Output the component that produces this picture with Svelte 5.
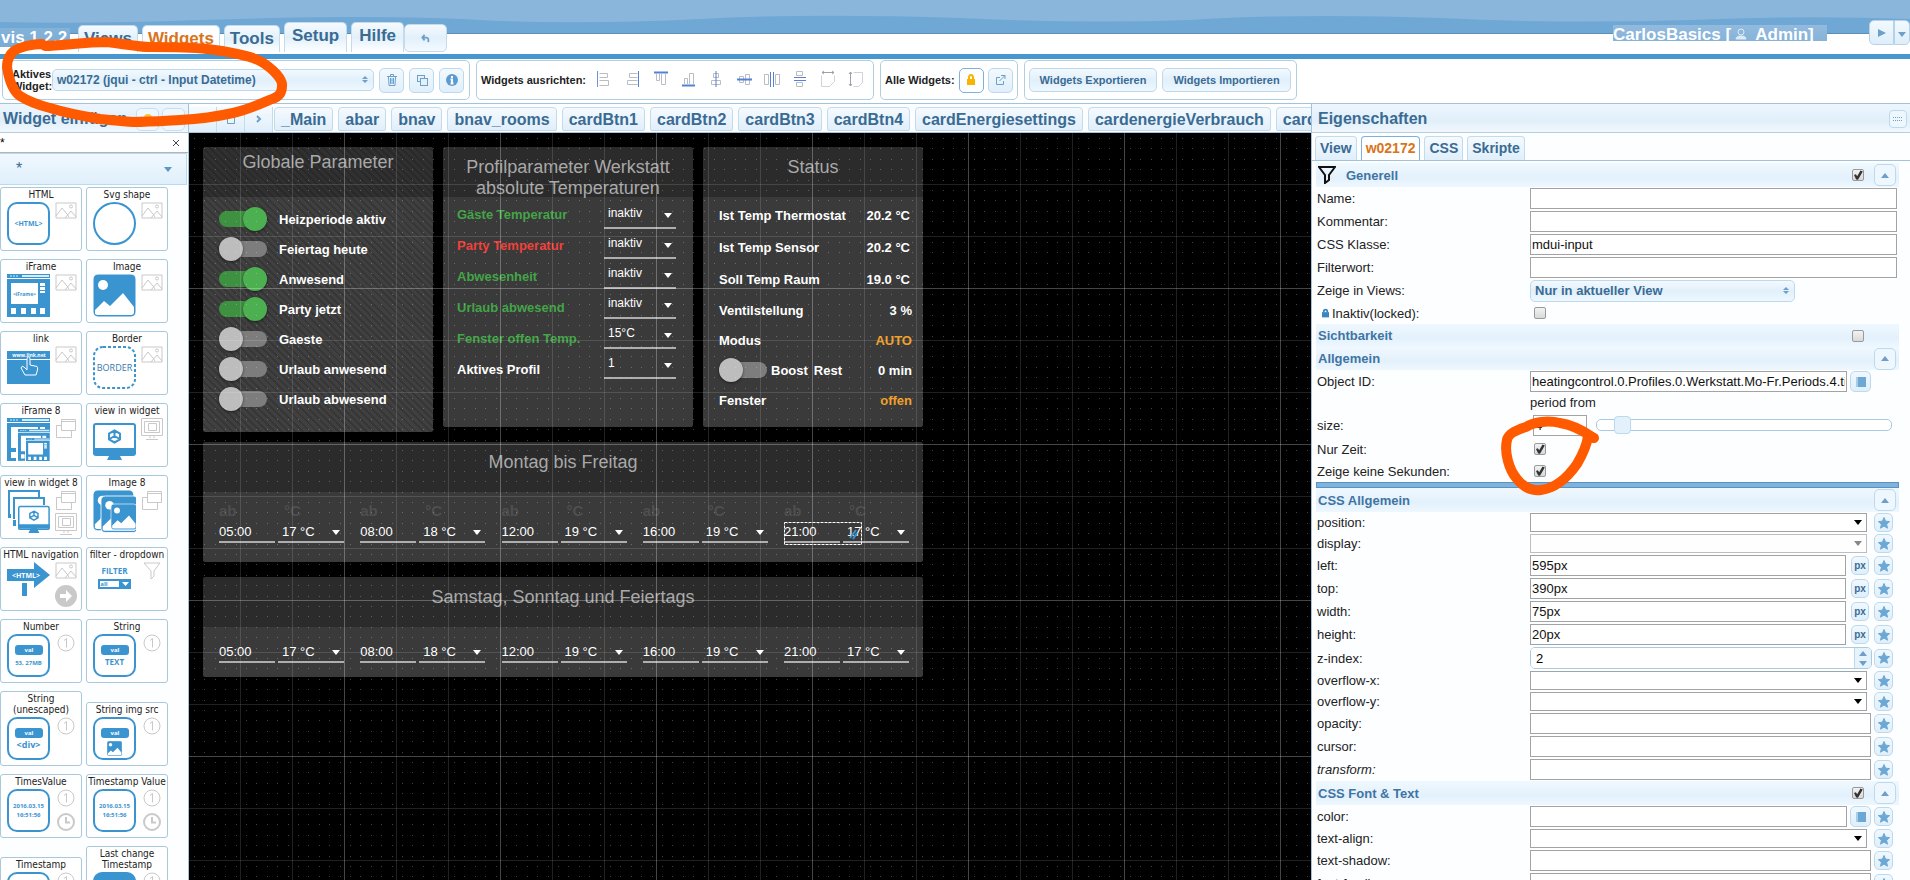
<script lang="ts">
  type Row = {
    label: string;
    kind: "text" | "select" | "number" | "color";
    value?: string;
    end?: "full" | "star" | "px" | "pick";
    dim?: boolean;
    italic?: boolean;
  };

  const mainTabs = [
    { name: "Views" },
    { name: "Widgets", active: true },
    { name: "Tools" },
    { name: "Setup", tall: true },
    { name: "Hilfe", tall: true },
  ];

  const views = [
    "_Main",
    "abar",
    "bnav",
    "bnav_rooms",
    "cardBtn1",
    "cardBtn2",
    "cardBtn3",
    "cardBtn4",
    "cardEnergiesettings",
    "cardenergieVerbrauch",
    "card",
  ];

  const alignIcons = ["left", "right", "top", "bottom", "vmid", "hmid", "hdist", "vdist", "width", "height"];

  const widgets = [
    { name: "HTML", icon: "html", badges: ["image"] },
    { name: "Svg shape", icon: "circle", badges: ["image"] },
    { name: "iFrame", icon: "iframe", badges: ["image"] },
    { name: "Image", icon: "picture", badges: ["image"] },
    { name: "link", icon: "link", badges: ["image"] },
    { name: "Border", icon: "border", badges: ["image"] },
    { name: "iFrame 8", icon: "iframe8", badges: ["windows"] },
    { name: "view in widget", icon: "monitor", badges: ["screen"] },
    { name: "view in widget 8", icon: "monitor8", badges: ["windows", "screen"] },
    { name: "Image 8", icon: "picture8", badges: ["windows"] },
    { name: "HTML navigation", icon: "nav", badges: ["image", "arrow"] },
    { name: "filter - dropdown", icon: "filter", badges: ["funnel"] },
    { name: "Number", icon: "val", text: "53, 27MB", size: 6, badges: ["one"] },
    { name: "String", icon: "val", text: "TEXT", size: 8, badges: ["one"] },
    { name: "String (unescaped)", icon: "val", text: "<div>", size: 9, badges: ["one"] },
    { name: "String img src", icon: "valimg", badges: ["one"] },
    { name: "TimesValue", icon: "date", badges: ["one", "clock"] },
    { name: "Timestamp Value", icon: "date", badges: ["one", "clock"] },
    { name: "Timestamp", icon: "date", badges: ["one", "clock"] },
    { name: "Last change Timestamp", icon: "solid", badges: ["one", "clock"] },
  ];

  let switches = $state([
    { name: "Heizperiode aktiv", on: true },
    { name: "Feiertag heute", on: false },
    { name: "Anwesend", on: true },
    { name: "Party jetzt", on: true },
    { name: "Gaeste", on: false },
    { name: "Urlaub anwesend", on: false },
    { name: "Urlaub abwesend", on: false },
  ]);

  const profile = [
    { name: "Gäste Temperatur", value: "inaktiv", tone: "green" },
    { name: "Party Temperatur", value: "inaktiv", tone: "red" },
    { name: "Abwesenheit", value: "inaktiv", tone: "green" },
    { name: "Urlaub abwesend", value: "inaktiv", tone: "green" },
    { name: "Fenster offen Temp.", value: "15°C", tone: "green" },
    { name: "Aktives Profil", value: "1", tone: "white" },
  ];

  const periods = [
    { time: "05:00", temp: "17 °C" },
    { time: "08:00", temp: "18 °C" },
    { time: "12:00", temp: "19 °C" },
    { time: "16:00", temp: "19 °C" },
    { time: "21:00", temp: "17 °C" },
  ];

  const general: Row[] = [
    { label: "Name", kind: "text", end: "full" },
    { label: "Kommentar", kind: "text", end: "full" },
    { label: "CSS Klasse", kind: "text", value: "mdui-input", end: "full" },
    { label: "Filterwort", kind: "text", end: "full" },
  ];

  const cssCommon: Row[] = [
    { label: "position", kind: "select" },
    { label: "display", kind: "select", dim: true },
    { label: "left", kind: "text", value: "595px", end: "px" },
    { label: "top", kind: "text", value: "390px", end: "px" },
    { label: "width", kind: "text", value: "75px", end: "px" },
    { label: "height", kind: "text", value: "20px", end: "px" },
    { label: "z-index", kind: "number", value: "2" },
    { label: "overflow-x", kind: "select" },
    { label: "overflow-y", kind: "select" },
    { label: "opacity", kind: "text", end: "star" },
    { label: "cursor", kind: "text", end: "star" },
    { label: "transform", kind: "text", end: "star", italic: true },
  ];

  const cssFont: Row[] = [
    { label: "color", kind: "color", end: "pick" },
    { label: "text-align", kind: "select" },
    { label: "text-shadow", kind: "text", end: "star" },
    { label: "font-family", kind: "text", end: "star" },
  ];

  // five dots per minor grid cell
  const dots = [5, 15, 26, 36, 47];

  let size = $state(4);
</script>

{#snippet tri(dir: string)}
  <svg class="tri" viewBox="0 0 8 5" aria-hidden="true">
    <path d={dir === "up" ? "M0 5L4 0L8 5Z" : "M0 0L4 5L8 0Z"} fill="currentColor" />
  </svg>
{/snippet}

{#snippet updown()}
  <svg class="updown" viewBox="0 0 6 9" aria-hidden="true">
    <path d="M0 4L3 1L6 4ZM0 5L3 8L6 5Z" fill="#6d9fc9" />
  </svg>
{/snippet}

{#snippet star()}
  <button class="mini star" type="button" aria-label="Favorit">
    <svg viewBox="0 0 12 12"><path d="M6 0.5L7.6 4.2L11.6 4.6L8.6 7.2L9.5 11.2L6 9.1L2.5 11.2L3.4 7.2L0.4 4.6L4.4 4.2Z" fill="#6da8d5" stroke="#6da8d5" /></svg>
  </button>
{/snippet}

{#snippet pick()}
  <button class="mini pick" type="button" aria-label="Auswählen">
    <svg viewBox="0 0 12 12"><path d="M3 1H11V11H3Z" fill="#6da8d5" /><path d="M1 2H3M1 4H3M1 6H3M1 8H3M1 10H3" stroke="#6da8d5" /></svg>
  </button>
{/snippet}

{#snippet field(row: Row)}
  <div class="row {row.kind}">
    <label class:italic={row.italic} for={"f-" + row.label}>{row.label}:</label>
    <div class="ctl">
      {#if row.kind === "select"}
        <span class="box" class:dim={row.dim}>
          <select id={"f-" + row.label} disabled={row.dim}><option></option></select>
          {@render tri("down")}
        </span>
      {:else if row.kind === "number"}
        <span class="spin">
          <input id={"f-" + row.label} type="text" value={row.value} />
          <span class="arrows">{@render tri("up")}{@render tri("down")}</span>
        </span>
      {:else}
        <input class="plain" class:near={row.end === "star"} id={"f-" + row.label} type="text" value={row.value ?? ""} />
      {/if}
      {#if row.end === "px"}
        <button class="mini px" type="button">px</button>
      {:else if row.end === "pick"}
        {@render pick()}
      {/if}
      {#if row.end !== "full"}
        {@render star()}
      {/if}
    </div>
  </div>
{/snippet}

{#snippet alignIcon(kind: string)}
  <svg class="align" viewBox="0 0 18 18" fill="none" stroke="#b9bdc4" aria-hidden="true">
    {#if kind === "left"}
      <path d="M4.500 3.500H12.500V7.500H4.500M4.500 10.500H13.500V15.500H4.500" /><path d="M2.500 1V17" stroke="#6f94d8" />
    {:else if kind === "right"}
      <path d="M14.500 3.500H6.500V7.500H14.500M14.500 10.500H4.500V14.500H14.500" /><path d="M15.500 1V17" stroke="#5580d4" />
    {:else if kind === "top"}
      <path d="M5.500 4V10.500H8.500V4M10.500 4V14.500H14.500V4" /><path d="M3 2.500H17" stroke="#5580d4" stroke-width="2" />
    {:else if kind === "bottom"}
      <path d="M5.500 14V8.500H8.500V14M10.500 14V3.500H14.500V14" /><path d="M3 15.500H16" stroke="#5580d4" stroke-width="2" />
    {:else if kind === "vmid"}
      <path d="M6.500 3.500H11.500V7.500H6.500ZM4.500 10.500H13.500V14.500H4.500Z" /><path d="M9 1V17" stroke="#5580d4" />
    {:else if kind === "hmid"}
      <path d="M4.500 6.500H8.500V12.500H4.500ZM10.500 4.500H14.500V14.500H10.500Z" /><path d="M2 9.500H17" stroke="#5580d4" stroke-width="2" />
    {:else if kind === "hdist"}
      <path d="M1.500 4.500H5.500V14.500H1.500ZM12.500 4.500H16.500V14.500H12.500Z" /><path d="M7.500 2V17M10.500 2V17" stroke="#5580d4" />
    {:else if kind === "vdist"}
      <path d="M5.500 1.500H11.500V5.500H5.500ZM5.500 12.500H11.500V16.500H5.500Z" /><path d="M3 7.500H15M3 10.500H15" stroke="#5580d4" />
    {:else if kind === "width"}
      <path d="M2.500 5.500V16.500H10.500L15.500 11.500V5.500" stroke="#cfd2d8" /><path d="M3 2.500H15M5 1L3 2.500L5 4M13 1L15 2.500L13 4" stroke="#9da1aa" />
    {:else}
      <path d="M6.500 2.500H15.500V12.500L11.500 16.500H6.500" stroke="#cfd2d8" /><path d="M3.500 2V16M2 4L3.500 2L5 4M2 14L3.500 16L5 14" stroke="#9da1aa" />
    {/if}
  </svg>
{/snippet}

{#snippet badge(kind: string)}
  <svg class="badge" viewBox="0 0 22 22" fill="none" stroke="#c9c9c9" aria-hidden="true">
    {#if kind === "image"}
      <path d="M1 1H21V16H1ZM1 14L7 6L12 12M10 16L16 9L21 15M12 12L14 15" /><circle cx="16" cy="4.500" r="1.500" />
    {:else if kind === "windows"}
      <path d="M6.500 1.500H20.500V12.500H6.500ZM6.500 3.500H20.500M6 7.500H1.500V19.500H16.500V13" />
    {:else if kind === "screen"}
      <path d="M0.500 0.500H21.500V17.500H0.500ZM3.500 3.500H18.500V14.500H3.500ZM7.500 5.500H15.500V12.500H7.500ZM9 18V20M13 18V20M5 21.500H17" />
    {:else if kind === "arrow"}
      <circle cx="11" cy="11" r="11" fill="#c9c9c9" stroke="none" /><path d="M5 9H11V5L17 11L11 17V13H5Z" fill="#fff" stroke="none" />
    {:else if kind === "funnel"}
      <path d="M3 1H19L13 9V14L10 17V9Z" />
    {:else if kind === "one"}
      <circle cx="11" cy="9" r="8" /><path d="M9 6.500L11.500 4.500V13.500" />
    {:else}
      <circle cx="11" cy="10" r="8" stroke-width="2" /><path d="M11 5V10.500H15" stroke-width="2" />
    {/if}
  </svg>
{/snippet}

{#snippet frame(x: number, y: number, s: number)}
  <g transform="translate({x} {y}) scale({s})">
    <path d="M0 0H43V4H0Z" fill="#3a94d0" /><path d="M15 2H42" stroke="#d8ebf8" stroke-width="2" /><path d="M3 2H12" stroke="#d8ebf8" stroke-dasharray="2 1" />
    <path d="M0 5H43V43H0Z" fill="#3a94d0" />
    <path d="M4 9H31V30H4ZM33 9H38V12H33ZM33 13H38V16H33ZM33 17H38V19H33ZM4 34H9V40H4ZM14 34H19V40H14ZM24 34H29V40H24ZM33 34H38V40H33Z" fill="#fff" />
  </g>
{/snippet}

{#snippet monitor(x: number, y: number, s: number)}
  <g transform="translate({x} {y}) scale({s})">
    <rect x="1" y="6" width="41" height="31" rx="2" fill="#fff" stroke="#3a94d0" stroke-width="2" />
    <path d="M0 30H43V36H0Z M17 36H26L29 42H14Z" fill="#3a94d0" />
    <path d="M21.500 12.500L27 15.500V21.500L21.500 24.500L16 21.500V15.500ZM21.500 12.500V18L16.500 21M21.500 18L26.500 21" fill="none" stroke="#3a94d0" stroke-width="2" />
  </g>
{/snippet}

{#snippet landscape(x: number, y: number, s: number)}
  <g transform="translate({x} {y}) scale({s})">
    <rect width="43" height="43" rx="5" fill="#3a94d0" stroke="#fff" />
    <circle cx="10" cy="11" r="5" fill="#fff" />
    <path d="M2 40V36L11 27L17 32L30 19L41 33V38Q41 41 38 41H4Z" fill="#fff" />
  </g>
{/snippet}

{#snippet widgetIcon(kind: string, text: string | undefined, fs: number | undefined)}
  <svg class="wicon" viewBox="0 0 43 43" aria-hidden="true">
    {#if kind === "html"}
      <rect x="1" y="1" width="41" height="41" rx="9" class="line" />
      <text x="21.500" y="24" font-size="7">&lt;HTML&gt;</text>
    {:else if kind === "circle"}
      <circle cx="21.500" cy="21.500" r="20.500" class="line" />
    {:else if kind === "iframe"}
      {@render frame(0, 0, 1)}
      <text x="17.500" y="22" font-size="5">&lt;iFrame&gt;</text>
    {:else if kind === "picture"}
      {@render landscape(0, 0, 1)}
    {:else if kind === "link"}
      <path d="M0 5H43V38H0Z" fill="#3a94d0" /><path d="M0 13.500H43" stroke="#fff" />
      <text x="22" y="11" font-size="5" class="inv">www.link.net</text>
      <path d="M20 24V13Q20 11 21.500 11Q23 11 23 13V19L30 20.500Q31 21 30.500 24L29 29H18L14 22Q15 19 17 21L20 24" fill="#3a94d0" stroke="#fff" />
    {:else if kind === "border"}
      <rect x="1" y="1" width="41" height="41" rx="9" class="line" stroke-dasharray="3 2" />
      <text x="21.500" y="25" font-size="9" class="thin">BORDER</text>
    {:else if kind === "iframe8"}
      {@render frame(0, 0, 1)}
      <path d="M9 11H43V43H9Z" fill="#fff" />
      {@render frame(11, 11, 0.74)}
      <path d="M18 20H43V43H18Z" fill="#fff" />
      {@render frame(19, 20, 0.55)}
    {:else if kind === "monitor"}
      {@render monitor(0, 0, 1)}
    {:else if kind === "monitor8"}
      <path d="M2 24V1H32V8M7 29V8H37V15" fill="none" stroke="#3a94d0" stroke-width="2" />
      <path d="M1 24H4V28H1ZM6 30H9V36H6Z" fill="#3a94d0" />
      {@render monitor(11, 12, 0.74)}
    {:else if kind === "picture8"}
      {@render landscape(0, 0, 0.95)}
      {@render landscape(8, 6, 0.85)}
      {@render landscape(18, 14, 0.6)}
    {:else if kind === "nav"}
      <path d="M0 7H27V0L43 13L27 26V19H0ZM15 21H20V34H15Z" fill="#3a94d0" />
      <text x="19" y="16" font-size="7" class="inv">&lt;HTML&gt;</text>
    {:else if kind === "filter"}
      <text x="21.500" y="12" font-size="8">FILTER</text>
      <rect x="5" y="17" width="33" height="10" fill="#3a94d0" /><path d="M7 19H26V25H7Z" fill="#fff" /><path d="M29 20H36L32.500 24Z" fill="#fff" />
      <text x="11" y="24" font-size="6">all</text>
    {:else if kind === "val" || kind === "valimg"}
      <rect x="1" y="1" width="41" height="41" rx="9" class="line" />
      <rect x="8" y="11" width="28" height="10" rx="3" fill="#3a94d0" />
      <text x="22" y="18" font-size="6" class="inv">val</text>
      {#if kind === "valimg"}
        {@render landscape(14, 24, 0.35)}
      {:else}
        <text x="21.500" y="31" font-size={fs}>{text}</text>
      {/if}
    {:else if kind === "date"}
      <rect x="1" y="1" width="41" height="41" rx="9" class="line" />
      <text x="21.500" y="19" font-size="6">2016.03.15</text>
      <text x="21.500" y="28" font-size="6">16:51:56</text>
    {:else}
      <rect width="43" height="43" rx="9" fill="#3a94d0" />
    {/if}
  </svg>
{/snippet}

{#snippet week(title: string, labels: boolean)}
  <section class="card wide" class:short={!labels}>
    <h2>{title}</h2>
    {#if labels}
      <div class="periods heads">
        {#each periods as _}
          <div class="period"><span>ab</span><span>°C</span></div>
        {/each}
      </div>
    {/if}
    <div class="periods">
      {#each periods as p, i}
        <div class="period">
          <input type="text" value={p.time} aria-label="Beginn" />
          <span class="drop">
            <select aria-label="Temperatur"><option>{p.temp}</option></select>
            {@render tri("down")}
          </span>
          {#if labels && i === 4}
            <svg class="selection" width="78" height="23" aria-hidden="true">
              <rect x="0.500" y="0.500" width="77" height="22" fill="none" stroke="#fff" stroke-dasharray="3 1" />
              <path d="M66 16L72 8M69 17L73 11" stroke="#3a94d0" stroke-width="2" />
            </svg>
          {/if}
        </div>
      {/each}
    </div>
  </section>
{/snippet}

<div class="app">
  <header class="banner">
    <svg class="wave" viewBox="0 0 1910 34" preserveAspectRatio="none" aria-hidden="true">
      <path d="M0 22Q90 24 200 20Q380 14 480 20Q580 25 700 19Q810 13 960 18Q1080 24 1190 20Q1300 13 1440 18Q1560 24 1690 20Q1800 15 1910 19V34H0Z" fill="#6fa8d5" />
      <path d="M0 33.500H1910" stroke="#5c8fb8" />
    </svg>
    <span class="brand">vis 1.2.2</span>
    <nav>
      {#each mainTabs as t}
        <a href="#{t.name}" class:active={t.active} class:tall={t.tall}>{t.name}</a>
      {/each}
      <button class="undo" type="button" aria-label="Rückgängig">
        <svg viewBox="0 0 10 10" fill="none" stroke="#6d9fc9" stroke-width="2"><path d="M4 1L1.500 4L4 7M2 4H6Q9 4 8 9" /></svg>
      </button>
    </nav>
    <span class="user">CarlosBasics [<svg viewBox="0 0 12 12" fill="none" stroke="#dcebf7"><circle cx="6" cy="4" r="3" /><path d="M1 11Q1 8 6 8Q11 8 11 11Z" fill="#dcebf7" /></svg> Admin]</span>
    <div class="play">
      <button type="button" aria-label="Start"><svg viewBox="0 0 8 8"><path d="M0 0L8 4L0 8Z" fill="#6d9fc9" /></svg></button>
      <button type="button" aria-label="Menü">{@render tri("down")}</button>
    </div>
  </header>

  <div class="toolbar">
    <div class="group first">
      <label class="stack" for="active-widget">Aktives Widget:</label>
      <span class="jq">
        <select id="active-widget"><option>w02172 (jqui - ctrl - Input Datetime)</option></select>
        {@render updown()}
      </span>
      <button class="tool" type="button" aria-label="Löschen">
        <svg viewBox="0 0 12 12" fill="none" stroke="#6d9fc9"><path d="M1 2.500H11M4.500 2V0.500H7.500V2M2.500 3L3 11.500H9L9.500 3M4.500 4V10M6 4V10M7.500 4V10" /></svg>
      </button>
      <button class="tool" type="button" aria-label="Kopieren">
        <svg viewBox="0 0 12 12" fill="#e3f1fb" stroke="#6d9fc9"><rect x="1.500" y="1.500" width="7" height="6" /><rect x="4.500" y="4.500" width="7" height="7" /></svg>
      </button>
      <button class="tool" type="button" aria-label="Info">
        <svg viewBox="0 0 12 12"><circle cx="6" cy="6" r="6" fill="#5b9bd0" /><path d="M6 2V4M4.500 5.500H6V9.500M4.500 9.500H7.500" stroke="#fff" stroke-width="2" fill="none" /></svg>
      </button>
    </div>
    <div class="group aligns">
      <span class="cap">Widgets ausrichten:</span>
      {#each alignIcons as a}
        <button class="flat" type="button" aria-label={a}>{@render alignIcon(a)}</button>
      {/each}
    </div>
    <div class="group all">
      <span class="cap">Alle Widgets:</span>
      <button class="tool on" type="button" aria-label="Sperren">
        <svg viewBox="0 0 12 12"><path d="M2 5H10V11H2Z" fill="#f7b500" /><path d="M4 5V3.500Q4 1 6 1Q8 1 8 3.500V5" stroke="#f7b500" stroke-width="2" fill="none" /></svg>
      </button>
      <button class="tool" type="button" aria-label="Öffnen">
        <svg viewBox="0 0 12 12" fill="none" stroke="#6d9fc9"><path d="M6 3.500H2.500V10.500H9.500V7M7 1.500H11V5M11 1.500L5.500 7" /></svg>
      </button>
    </div>
    <div class="group">
      <button class="wide-btn" type="button">Widgets Exportieren</button>
      <button class="wide-btn" type="button">Widgets Importieren</button>
    </div>
  </div>

  <div class="work">
    <aside class="palette">
      <div class="bar">
        <h2>Widget einfügen</h2>
        <button class="bar-btn" type="button" aria-label="Filter"><svg viewBox="0 0 12 12"><circle cx="6" cy="6" r="4" fill="#f7c33b" /></svg></button>
        <button class="bar-btn" type="button" aria-label="Minimieren"></button>
      </div>
      <div class="search">
        <input type="text" value="*" aria-label="Filter" />
        <button type="button" aria-label="Leeren"><svg viewBox="0 0 8 8"><path d="M1 1L7 7M7 1L1 7" stroke="#444" /></svg></button>
      </div>
      <button class="category" type="button"><span>*</span>{@render tri("down")}</button>
      <div class="tiles">
        {#each widgets as w}
          <div class="tile">
            <span class="tname">{w.name}</span>
            <div class="tbody">
              {@render widgetIcon(w.icon, w.text, w.size)}
              <div class="badges">
                {#each w.badges as b}{@render badge(b)}{/each}
              </div>
            </div>
          </div>
        {/each}
      </div>
    </aside>

    <main>
      <nav class="viewtabs">
        <div class="navbtns">
          <button type="button" aria-label="Zurück"><svg viewBox="0 0 10 10" fill="none" stroke="#6d9fc9"><path d="M6 2L3 5L6 8" /></svg></button>
          <button type="button" aria-label="Liste"><svg viewBox="0 0 10 10" fill="none" stroke="#6d9fc9"><path d="M1.500 1.500H8.500V9.500H1.500Z" /></svg></button>
          <button type="button" aria-label="Weiter"><svg viewBox="0 0 10 10" fill="none" stroke="#6d9fc9" stroke-width="2"><path d="M3 2L6 5L3 8" /></svg></button>
        </div>
        {#each views as v}
          <a href="#{v}">{v}</a>
        {/each}
      </nav>
      <div class="canvas">
        <div class="board">
          <section class="card global">
            <h2>Globale Parameter</h2>
            {#each switches as s}
              <label class="switchrow">
                <input class="switch" type="checkbox" bind:checked={s.on} />
                {s.name}
              </label>
            {/each}
          </section>
          <section class="card profile">
            <h2>Profilparameter Werkstatt absolute Temperaturen</h2>
            <div class="pcols">
              <div class="plabels">
                {#each profile as p, i}
                  <label class={p.tone} for={"p" + i}>{p.name}</label>
                {/each}
              </div>
              <div class="pselects">
                {#each profile as p, i}
                  <span class="drop">
                    <select id={"p" + i}><option>{p.value}</option></select>
                    {@render tri("down")}
                  </span>
                {/each}
              </div>
            </div>
          </section>
          <section class="card status">
            <h2>Status</h2>
            <div class="srow loose"><span>Ist Temp Thermostat</span><span>20.2 °C</span></div>
            <div class="srow loose"><span>Ist Temp Sensor</span><span>20.2 °C</span></div>
            <div class="srow loose"><span>Soll Temp Raum</span><span>19.0 °C</span></div>
            <div class="srow"><span>Ventilstellung</span><span>3 %</span></div>
            <div class="srow"><span>Modus</span><span class="orange">AUTO</span></div>
            <div class="srow">
              <label><input class="switch" type="checkbox" />Boost</label>
              <span class="rest">Rest</span>
              <span>0 min</span>
            </div>
            <div class="srow"><span>Fenster</span><span class="orange">offen</span></div>
          </section>
          {@render week("Montag bis Freitag", true)}
          {@render week("Samstag, Sonntag und Feiertags", false)}
        </div>
        <svg class="gridlines" aria-hidden="true">
          <defs>
            <pattern id="cell" width="52" height="52" patternUnits="userSpaceOnUse">
              {#each dots as x}
                {#each dots as y}
                  <rect {x} {y} width="1" height="1" fill="#fff" fill-opacity="0.25" />
                {/each}
              {/each}
              <path d="M51.500 0V52M0 51.500H52" stroke="#fff" stroke-opacity="0.13" />
            </pattern>
            <pattern id="major" width="156" height="156" patternUnits="userSpaceOnUse">
              <path d="M155.500 0V156M0 155.500H156" stroke="#fff" stroke-opacity="0.17" />
            </pattern>
          </defs>
          <rect width="100%" height="100%" fill="url(#cell)" />
          <rect width="100%" height="100%" fill="url(#major)" />
        </svg>
      </div>
    </main>

    <aside class="props">
      <div class="bar">
        <h2>Eigenschaften</h2>
        <button class="min" type="button" aria-label="Minimieren"><svg viewBox="0 0 10 4"><path d="M0 0.500H10M0 3.500H10" stroke="#6d9fc9" stroke-dasharray="1 1" /></svg></button>
      </div>
      <nav class="ptabs">
        <a href="#view">View</a>
        <a href="#widget" class="active">w02172</a>
        <a href="#css">CSS</a>
        <a href="#scripts">Skripte</a>
      </nav>
      <div class="form">
        <div class="head tallhead">
          <svg class="funnel" viewBox="0 0 18 18" fill="none" stroke="#111" stroke-width="2"><path d="M1 1H17L11 9V14L7 17V9Z" /></svg>
          <h3>Generell</h3>
          <input type="checkbox" checked aria-label="Generell" />
          <button type="button" aria-label="Einklappen">{@render tri("up")}</button>
        </div>
        {#each general as row}
          {@render field(row)}
        {/each}
        <div class="row">
          <label for="f-views">Zeige in Views:</label>
          <div class="ctl">
            <span class="jq views">
              <select id="f-views"><option>Nur in aktueller View</option></select>
              {@render updown()}
            </span>
          </div>
        </div>
        <div class="row check">
          <label for="f-lock"><svg class="lock" viewBox="0 0 8 10"><path d="M0 4H8V10H0Z" fill="#3a86c0" /><path d="M2 4V3Q2 1 4 1Q6 1 6 3V4" fill="none" stroke="#3a86c0" stroke-width="2" /></svg>Inaktiv(locked):</label>
          <div class="ctl"><input id="f-lock" type="checkbox" /></div>
        </div>
        <div class="head">
          <h3>Sichtbarkeit</h3>
          <input type="checkbox" aria-label="Sichtbarkeit" />
          <span class="nobtn"></span>
        </div>
        <div class="head">
          <h3>Allgemein</h3>
          <button type="button" aria-label="Einklappen">{@render tri("up")}</button>
        </div>
        <div class="row">
          <label for="f-oid">Object ID:</label>
          <div class="ctl">
            <input class="plain" id="f-oid" type="text" value="heatingcontrol.0.Profiles.0.Werkstatt.Mo-Fr.Periods.4.time" />
            {@render pick()}
            <span class="nostar"></span>
          </div>
        </div>
        <div class="row note"><span></span><div class="ctl">period from</div></div>
        <div class="row size">
          <label for="f-size">size:</label>
          <div class="ctl">
            <input class="plain" id="f-size" type="text" bind:value={size} />
            <input type="range" min="1" max="100" bind:value={size} aria-label="size" />
          </div>
        </div>
        <div class="row check">
          <label for="f-time">Nur Zeit:</label>
          <div class="ctl"><input id="f-time" type="checkbox" checked /></div>
        </div>
        <div class="row check">
          <label for="f-sec">Zeige keine Sekunden:</label>
          <div class="ctl"><input id="f-sec" type="checkbox" checked /></div>
        </div>
        <div class="divider"></div>
        <div class="head tallhead">
          <h3>CSS Allgemein</h3>
          <button type="button" aria-label="Einklappen">{@render tri("up")}</button>
        </div>
        {#each cssCommon as row}
          {@render field(row)}
        {/each}
        <div class="head tallhead">
          <h3>CSS Font &amp; Text</h3>
          <input type="checkbox" checked aria-label="CSS Font & Text" />
          <button type="button" aria-label="Einklappen">{@render tri("up")}</button>
        </div>
        {#each cssFont as row}
          {@render field(row)}
        {/each}
      </div>
    </aside>
  </div>

  <!-- hand-drawn markers -->
  <svg class="marks" aria-hidden="true">
    <g fill="none" stroke="#ff5a00" stroke-width="10" stroke-linecap="round" stroke-linejoin="round">
      <path d="M45 46C60 46 85 42 107 42C125 44 138 47 150 47C170 47 190 47 207 49C232 52 248 55 260 61C274 69 283 80 282 86C282 93 279 97 272 99C258 105 247 110 233 113C215 117 198 119 180 120C162 121 148 122 133 122C120 121 110 120 100 119C82 116 66 113 50 108C38 105 28 101 20 96C13 91 9 80 7 67C7 60 9 55 14 51C20 47 32 44 42 44" />
      <path d="M1594 438C1588 434 1575 425 1560 423C1548 420 1534 422 1526 427C1516 430 1508 434 1507 440C1504 452 1509 470 1517 479C1524 488 1532 491 1541 490C1556 488 1568 477 1577 464C1584 452 1587 445 1588 436" />
    </g>
  </svg>
</div>

<style>
  :global(body) {
    margin: 0;
    background: #fff;
    overflow: hidden;
  }
  .app {
    position: relative;
    height: 100vh;
    display: flex;
    flex-direction: column;
    font-family: "Liberation Sans", Arial, sans-serif;
    font-size: 13px;
    color: #222;
    overflow: hidden;
  }
  .app * {
    box-sizing: border-box;
  }
  input,
  select,
  button {
    font-family: inherit;
    margin: 0;
  }
  button {
    cursor: pointer;
    padding: 0;
  }
  select {
    appearance: none;
  }
  a {
    text-decoration: none;
  }
  h2,
  h3 {
    margin: 0;
  }
  svg {
    flex: none;
  }
  .tri {
    width: 8px;
    height: 5px;
  }

  /* banner */
  .banner {
    position: relative;
    flex: none;
    height: 59px;
    display: flex;
    align-items: flex-end;
    border-bottom: 5px solid #4696cf;
    background: linear-gradient(#8bb6dc 34px, #fff 34px);
  }
  .wave {
    position: absolute;
    left: 0;
    top: 0;
    width: 100%;
    height: 34px;
  }
  .brand {
    position: relative;
    width: 78px;
    height: 26px;
    padding-left: 1px;
    font-size: 17px;
    font-weight: bold;
    line-height: 20px;
    color: #fff;
    background: linear-gradient(#84b2d9, #78acd6) 0 0 / 70px 19px no-repeat;
  }
  .banner nav {
    position: relative;
    display: flex;
    align-items: flex-end;
    gap: 4px;
    margin-bottom: 2px;
  }
  .banner nav a {
    height: 27px;
    padding: 0 5px;
    border: 1px solid #c3dbeb;
    border-bottom: 0;
    border-radius: 5px 5px 0 0;
    background: linear-gradient(#f5fafe, #e2f0fb 50%, #fff);
    font-size: 17px;
    line-height: 26px;
    font-weight: bold;
    color: #3a6b93;
  }
  .banner nav a.active {
    color: #d9741a;
    background: #fbfdff;
  }
  .banner nav a.tall {
    height: 30px;
    padding: 0 7px;
  }
  .undo {
    width: 43px;
    height: 28px;
    margin-left: -4px;
    border: 1px solid #c3dbeb;
    border-radius: 5px;
    background: linear-gradient(#f5fafe, #e2f0fb 50%, #f4faff);
  }
  .undo svg {
    width: 9px;
    height: 9px;
  }
  .user {
    position: relative;
    margin-left: auto;
    margin-bottom: 13px;
    width: 214px;
    height: 16px;
    overflow: hidden;
    font-size: 17px;
    font-weight: bold;
    line-height: 20px;
    white-space: nowrap;
    color: #fff;
    background: linear-gradient(#92bade, #86b3d8);
  }
  .user svg {
    width: 12px;
    height: 12px;
    margin: 0 4px;
  }
  .play {
    position: relative;
    display: flex;
    margin-left: 42px;
    margin-bottom: 9px;
  }
  .play button {
    width: 25px;
    height: 25px;
    border: 1px solid #b5d2e8;
    border-radius: 5px 0 0 5px;
    background: linear-gradient(#f3f9fe, #ddeefa);
    color: #6d9fc9;
  }
  .play button + button {
    width: 16px;
    border-radius: 0 5px 5px 0;
  }
  .play svg {
    width: 8px;
  }

  /* toolbar */
  .toolbar {
    flex: none;
    display: flex;
    gap: 6px;
    height: 45px;
    padding: 1px 2px 3px;
    border-bottom: 1px solid #a5c3d8;
  }
  .group {
    display: flex;
    align-items: center;
    gap: 5px;
    padding: 0 5px 0 4px;
    border: 1px solid #b1cfe0;
    border-radius: 5px;
  }
  .group.first {
    width: 468px;
    padding-left: 9px;
  }
  .group.all {
    gap: 4px;
    padding-right: 4px;
  }
  .aligns {
    width: 398px;
  }
  .stack {
    width: 35px;
    font-size: 11px;
    line-height: 12px;
    font-weight: bold;
  }
  .cap {
    font-size: 11px;
    font-weight: bold;
    white-space: nowrap;
  }
  .jq {
    position: relative;
    flex: 1;
    display: flex;
  }
  .jq select {
    width: 100%;
    height: 22px;
    padding: 0 4px;
    border: 1px solid #bcd9ee;
    border-radius: 5px;
    background: linear-gradient(#f3f9fe, #e1f0fb 50%, #eef7fe);
    color: #3a6b93;
    font-size: 12px;
    font-weight: bold;
  }
  .updown {
    position: absolute;
    right: 6px;
    top: 6px;
    width: 6px;
    height: 9px;
  }
  .tool {
    display: grid;
    place-items: center;
    width: 25px;
    height: 25px;
    border: 1px solid #bcd9ee;
    border-radius: 5px;
    background: linear-gradient(#f3f9fe, #dfeffb);
  }
  .tool.on {
    background: #fdfeff;
    border-color: #7fb0dc;
  }
  .tool svg {
    width: 12px;
    height: 12px;
  }
  .flat {
    width: 23px;
    height: 25px;
    border: 0;
    background: none;
  }
  .aligns .cap {
    margin-right: 1px;
  }
  .align {
    width: 18px;
    height: 18px;
  }
  .wide-btn {
    height: 24px;
    padding: 0 10px;
    border: 1px solid #bcd9ee;
    border-radius: 5px;
    background: linear-gradient(#f3f9fe, #e1f0fb 50%, #eef7fe);
    color: #3a6b93;
    font-size: 11px;
    font-weight: bold;
  }

  .work {
    flex: 1;
    min-height: 0;
    display: grid;
    grid-template-columns: 189px minmax(0, 1fr) 599px;
  }
  .bar {
    display: flex;
    align-items: center;
    height: 29px;
    padding: 2px 3px 0;
    border-bottom: 1px solid #b5cfe2;
    background: linear-gradient(#edf6fd, #e1effa 60%, #f2f8fd);
  }
  .bar h2 {
    flex: 1;
    font-size: 16px;
    white-space: nowrap;
    color: #3a6b93;
  }
  .bar-btn {
    width: 23px;
    height: 23px;
    margin-left: 3px;
    border: 1px solid #c8dfef;
    border-radius: 5px;
    background: #f0f8fe;
  }
  .bar-btn svg {
    width: 12px;
  }

  /* palette */
  .palette {
    border-right: 1px solid #a5c3d8;
    overflow: hidden;
    background: #fdfeff;
  }
  .search {
    display: flex;
    align-items: center;
    height: 20px;
    padding-right: 8px;
    border-bottom: 1px solid #b5b5b5;
  }
  .search input {
    flex: 1;
    min-width: 0;
    height: 18px;
    padding: 0;
    border: 0;
    font-size: 12px;
    outline: 0;
  }
  .search button {
    display: grid;
    place-items: center;
    width: 8px;
    height: 18px;
    border: 0;
    background: none;
  }
  .search svg {
    width: 8px;
    height: 8px;
  }
  .category {
    display: flex;
    align-items: center;
    justify-content: space-between;
    width: 187px;
    height: 32px;
    padding: 0 14px 0 16px;
    border: 1px solid #bcd9ee;
    border-left: 0;
    background: linear-gradient(#f0f8fe, #e0f0fb);
    color: #5e97c4;
    font-size: 16px;
  }
  .category span {
    color: #3a6b93;
  }
  .tiles {
    display: grid;
    grid-template-columns: 82px 82px;
    align-items: end;
    gap: 8px 4px;
    padding-top: 2px;
  }
  .tile {
    min-height: 64px;
    padding: 1px 0 4px;
    border: 1px solid #a9c8da;
    border-radius: 3px;
    background: #fff;
  }
  .tname {
    display: block;
    margin: 0 -1px;
    font-family: "DejaVu Sans Condensed", "Noto Sans", sans-serif;
    font-size: 10px;
    line-height: 11px;
    text-align: center;
  }
  .tbody {
    display: flex;
    gap: 5px;
    height: 46px;
    padding: 2px 0 0 6px;
  }
  .wicon {
    width: 43px;
    height: 43px;
  }
  .wicon text {
    fill: #3a94d0;
    font-family: "Open Sans", sans-serif;
    font-weight: bold;
    text-anchor: middle;
  }
  .wicon .inv {
    fill: #fff;
  }
  .wicon .thin {
    font-weight: normal;
    fill: #3778ad;
  }
  .wicon .line {
    fill: #fff;
    stroke: #3a94d0;
    stroke-width: 2;
  }
  .badges {
    display: flex;
    flex-direction: column;
    gap: 1px;
  }
  .badge {
    width: 22px;
    height: 22px;
  }

  /* view tabs and canvas */
  main {
    display: flex;
    flex-direction: column;
    min-width: 0;
  }
  .viewtabs {
    flex: none;
    display: flex;
    gap: 5px;
    height: 29px;
    padding-top: 3px;
    overflow: hidden;
    background: #fbfdff;
    border-bottom: 1px solid #a5c3d8;
  }
  .viewtabs a {
    height: 24px;
    padding: 0 6px;
    border: 1px solid #c3dbeb;
    border-radius: 4px 4px 2px 2px;
    background: linear-gradient(#f5fafe, #e0effb);
    color: #3a6b93;
    font-size: 16px;
    line-height: 23px;
    font-weight: bold;
    white-space: nowrap;
  }
  .navbtns {
    display: flex;
    flex: none;
    margin-right: -4px;
  }
  .navbtns button {
    width: 28px;
    height: 25px;
    border: 0;
    border-right: 1px solid #c3dbeb;
    background: linear-gradient(#f5fafe, #e0effb);
  }
  .navbtns svg {
    width: 10px;
    height: 10px;
  }
  .canvas {
    position: relative;
    flex: 1;
    min-height: 0;
    padding: 14px;
    overflow: hidden;
    background: #000;
    color: #fff;
  }
  .gridlines {
    position: absolute;
    left: 0;
    top: 0;
    width: 100%;
    height: 100%;
    pointer-events: none;
  }
  .board {
    display: grid;
    grid-template-columns: 230px 250px 220px;
    grid-template-rows: 285px 120px 105px;
    gap: 10px;
  }
  .card {
    border-radius: 2px;
    background: linear-gradient(#2b2b2b 50px, #3a3a3a 50px);
  }
  .card h2 {
    height: 50px;
    padding: 10px 12px 0;
    font-size: 18px;
    line-height: 21px;
    font-weight: normal;
    text-align: center;
    color: #a8a8a8;
  }
  .global {
    background:
      repeating-linear-gradient(45deg, rgba(0, 0, 0, 0.15) 0 2px, transparent 2px 5px),
      linear-gradient(#303030 50px, #404040 50px);
  }
  .global h2 {
    padding-top: 5px;
    margin-bottom: 7px;
  }
  .switchrow {
    display: flex;
    align-items: center;
    gap: 12px;
    height: 30px;
    padding-left: 16px;
    font-weight: bold;
  }
  .switch {
    appearance: none;
    position: relative;
    width: 48px;
    height: 24px;
  }
  .switch::before {
    content: "";
    position: absolute;
    inset: 4px 0;
    border-radius: 8px;
    background: #7d7d7d;
  }
  .switch::after {
    content: "";
    position: absolute;
    left: 0;
    top: 0;
    width: 24px;
    height: 24px;
    border-radius: 50%;
    background: #bdbdbd;
    box-shadow: 0 1px 3px rgba(0, 0, 0, 0.5);
  }
  .switch:checked::before {
    background: #3f9142;
  }
  .switch:checked::after {
    left: 24px;
    background: #4caf50;
  }
  .profile {
    align-self: start;
    height: 280px;
  }
  .pcols {
    display: flex;
    justify-content: space-between;
    padding: 2px 17px 0 14px;
  }
  .plabels,
  .pselects {
    display: flex;
    flex-direction: column;
  }
  .plabels label {
    height: 31px;
    line-height: 32px;
    font-weight: bold;
  }
  .green {
    color: #43a548;
  }
  .red {
    color: #f0413a;
  }
  .drop {
    position: relative;
    display: flex;
    color: #fff;
  }
  .drop select {
    width: 66px;
    height: 22px;
    padding: 0 4px;
    border: 0;
    border-bottom: 2px solid #aeaeae;
    background: transparent;
    color: #fff;
    font-size: 13px;
  }
  .drop .tri {
    position: absolute;
    right: 4px;
    top: 9px;
  }
  .pselects .drop select {
    width: 72px;
    height: 30px;
    font-size: 12px;
  }
  .pselects .drop .tri {
    top: 14px;
  }
  .status {
    align-self: start;
    height: 280px;
  }
  .status h2 {
    margin-bottom: 2px;
  }
  .srow {
    display: flex;
    align-items: center;
    justify-content: space-between;
    height: 30px;
    padding: 0 11px 0 16px;
    font-weight: bold;
  }
  .srow.loose {
    height: 32px;
    padding-right: 13px;
  }
  .srow label {
    display: flex;
    align-items: center;
    gap: 4px;
  }
  .rest {
    margin-right: 30px;
  }
  .orange {
    color: #f0a02a;
  }
  .wide {
    grid-column: 1 / -1;
  }
  .short {
    margin-top: 5px;
  }
  .short .periods {
    padding-top: 14px;
  }
  .periods {
    display: flex;
    justify-content: space-between;
    padding: 0 14px 0 16px;
  }
  .period {
    position: relative;
    display: flex;
    justify-content: space-between;
    width: 125px;
  }
  .period input {
    width: 56px;
    height: 22px;
    padding: 0;
    border: 0;
    border-bottom: 2px solid #aeaeae;
    background: transparent;
    color: #fff;
    font-size: 13px;
  }
  .heads {
    height: 29px;
    padding-top: 10px;
    font-size: 15px;
    font-weight: bold;
    color: #4f4f4f;
  }
  .heads .period span + span {
    width: 60px;
  }
  .selection {
    position: absolute;
    left: 0;
    top: 1px;
  }

  /* properties */
  .props {
    border-left: 1px solid #a5c3d8;
    background: #fdfeff;
    overflow: hidden;
  }
  .props .bar {
    padding-left: 6px;
  }
  .min {
    width: 18px;
    height: 18px;
    border: 1px solid #bcd9ee;
    border-radius: 4px;
    background: #eef7fe;
  }
  .min svg {
    display: block;
    width: 10px;
    margin: 0 auto;
  }
  .ptabs {
    display: flex;
    gap: 4px;
    height: 28px;
    padding: 3px 3px 0;
    border-bottom: 1px solid #a5c3d8;
  }
  .ptabs a {
    padding: 0 4px;
    border: 1px solid #c3dbeb;
    border-bottom: 0;
    border-radius: 4px 4px 0 0;
    background: linear-gradient(#f5fafe, #e0effb);
    font-size: 14px;
    line-height: 23px;
    font-weight: bold;
    color: #3a6b93;
  }
  .ptabs a.active {
    color: #d9741a;
    background: #fff;
    border-color: #7fb0dc;
  }
  .form {
    padding: 2px 11px 0 4px;
  }
  .head {
    display: flex;
    align-items: center;
    gap: 10px;
    height: 23px;
    padding: 0 3px 0 2px;
    background: linear-gradient(#f0f8fe, #e3f1fc 60%, #eef7fe);
  }
  .tallhead {
    height: 24px;
  }
  .head h3 {
    flex: 1;
    font-size: 13px;
    color: #3f74a3;
  }
  .head button {
    display: grid;
    place-items: center;
    width: 22px;
    height: 22px;
    border: 1px solid #bcd9ee;
    border-radius: 5px;
    background: #eef7fe;
    color: #6d9fc9;
  }
  .nobtn {
    width: 22px;
  }
  .funnel {
    width: 18px;
    height: 18px;
  }
  input[type="checkbox"]:not(.switch) {
    appearance: none;
    width: 12px;
    height: 12px;
    border: 1px solid #9a9a9a;
    border-radius: 2px;
    background: linear-gradient(#f2f2f2, #d9d9d9);
  }
  input[type="checkbox"]:not(.switch):checked::after {
    content: "";
    display: block;
    width: 10px;
    height: 10px;
    background: #333;
    clip-path: polygon(10% 50%, 28% 42%, 42% 62%, 75% 5%, 98% 15%, 50% 98%, 32% 95%);
  }
  .row {
    display: grid;
    grid-template-columns: 214px 1fr;
    align-items: center;
    height: 23px;
    padding-right: 2px;
  }
  .row label {
    padding-left: 1px;
  }
  .row.select {
    height: 21px;
  }
  .row.number {
    height: 24px;
  }
  .row.check {
    height: 22px;
  }
  .check input {
    margin-left: 4px;
  }
  .row.note {
    height: 19px;
  }
  .row.size {
    height: 26px;
  }
  .italic {
    font-style: italic;
  }
  .ctl {
    display: flex;
    align-items: center;
    gap: 5px;
  }
  .ctl .plain {
    flex: 1;
    min-width: 0;
    height: 21px;
    padding: 0 1px;
    border: 1px solid #a3a3a3;
    background: #fff;
    font-size: 13px;
    color: #111;
  }
  .ctl .near {
    margin-right: -2px;
  }
  .ctl .jq {
    flex: none;
    width: 265px;
  }
  .views select {
    font-size: 13px;
  }
  .box {
    position: relative;
    flex: 1;
    display: flex;
    margin-right: 2px;
    color: #000;
  }
  .box select {
    width: 100%;
    height: 19px;
    border: 1px solid #a3a3a3;
    background: #fff;
  }
  .box .tri {
    position: absolute;
    right: 5px;
    top: 6px;
    width: 8px;
    height: 7px;
  }
  .box.dim {
    color: #888;
  }
  .spin {
    flex: 1;
    display: flex;
    height: 22px;
    margin-right: -3px;
    border: 1px solid #a9cbe2;
    border-radius: 5px;
    overflow: hidden;
    background: #fff;
  }
  .spin input {
    flex: 1;
    min-width: 0;
    padding: 0 5px;
    border: 0;
    font-size: 13px;
  }
  .arrows {
    display: flex;
    flex-direction: column;
    justify-content: space-around;
    align-items: center;
    width: 17px;
    border-left: 1px solid #bcd9ee;
    background: #e6f3fc;
    color: #6d9fc9;
  }
  .mini {
    display: grid;
    place-items: center;
    width: 19px;
    height: 19px;
    border: 1px solid #bcd9ee;
    border-radius: 5px;
    background: linear-gradient(#f0f8fe, #dfeffb);
  }
  .star {
    margin-right: 4px;
  }
  .mini svg {
    width: 12px;
    height: 12px;
  }
  .px {
    width: 18px;
    color: #3a6b93;
    font-size: 10px;
    font-weight: bold;
  }
  .pick {
    width: 21px;
    height: 21px;
    margin: 0 -2px;
  }
  .nostar {
    width: 23px;
  }
  .lock {
    width: 7px;
    height: 10px;
    margin: 0 3px 0 5px;
  }
  .size .ctl {
    gap: 9px;
    padding: 0 5px 0 3px;
  }
  .size .plain {
    flex: none;
    width: 54px;
  }
  input[type="range"] {
    appearance: none;
    flex: 1;
    height: 12px;
    padding: 0 9px;
    border: 1px solid #a9cbe2;
    border-radius: 5px;
    background: #fff;
  }
  input[type="range"]::-webkit-slider-thumb {
    appearance: none;
    width: 17px;
    height: 18px;
    border: 1px solid #bcd9ee;
    border-radius: 4px;
    background: #e3f1fc;
  }
  .divider {
    height: 6px;
    border: 1px solid #5b93c0;
    background: #7fb3dd;
  }
  .marks {
    position: absolute;
    left: 0;
    top: 0;
    width: 100%;
    height: 100%;
    pointer-events: none;
  }
</style>
